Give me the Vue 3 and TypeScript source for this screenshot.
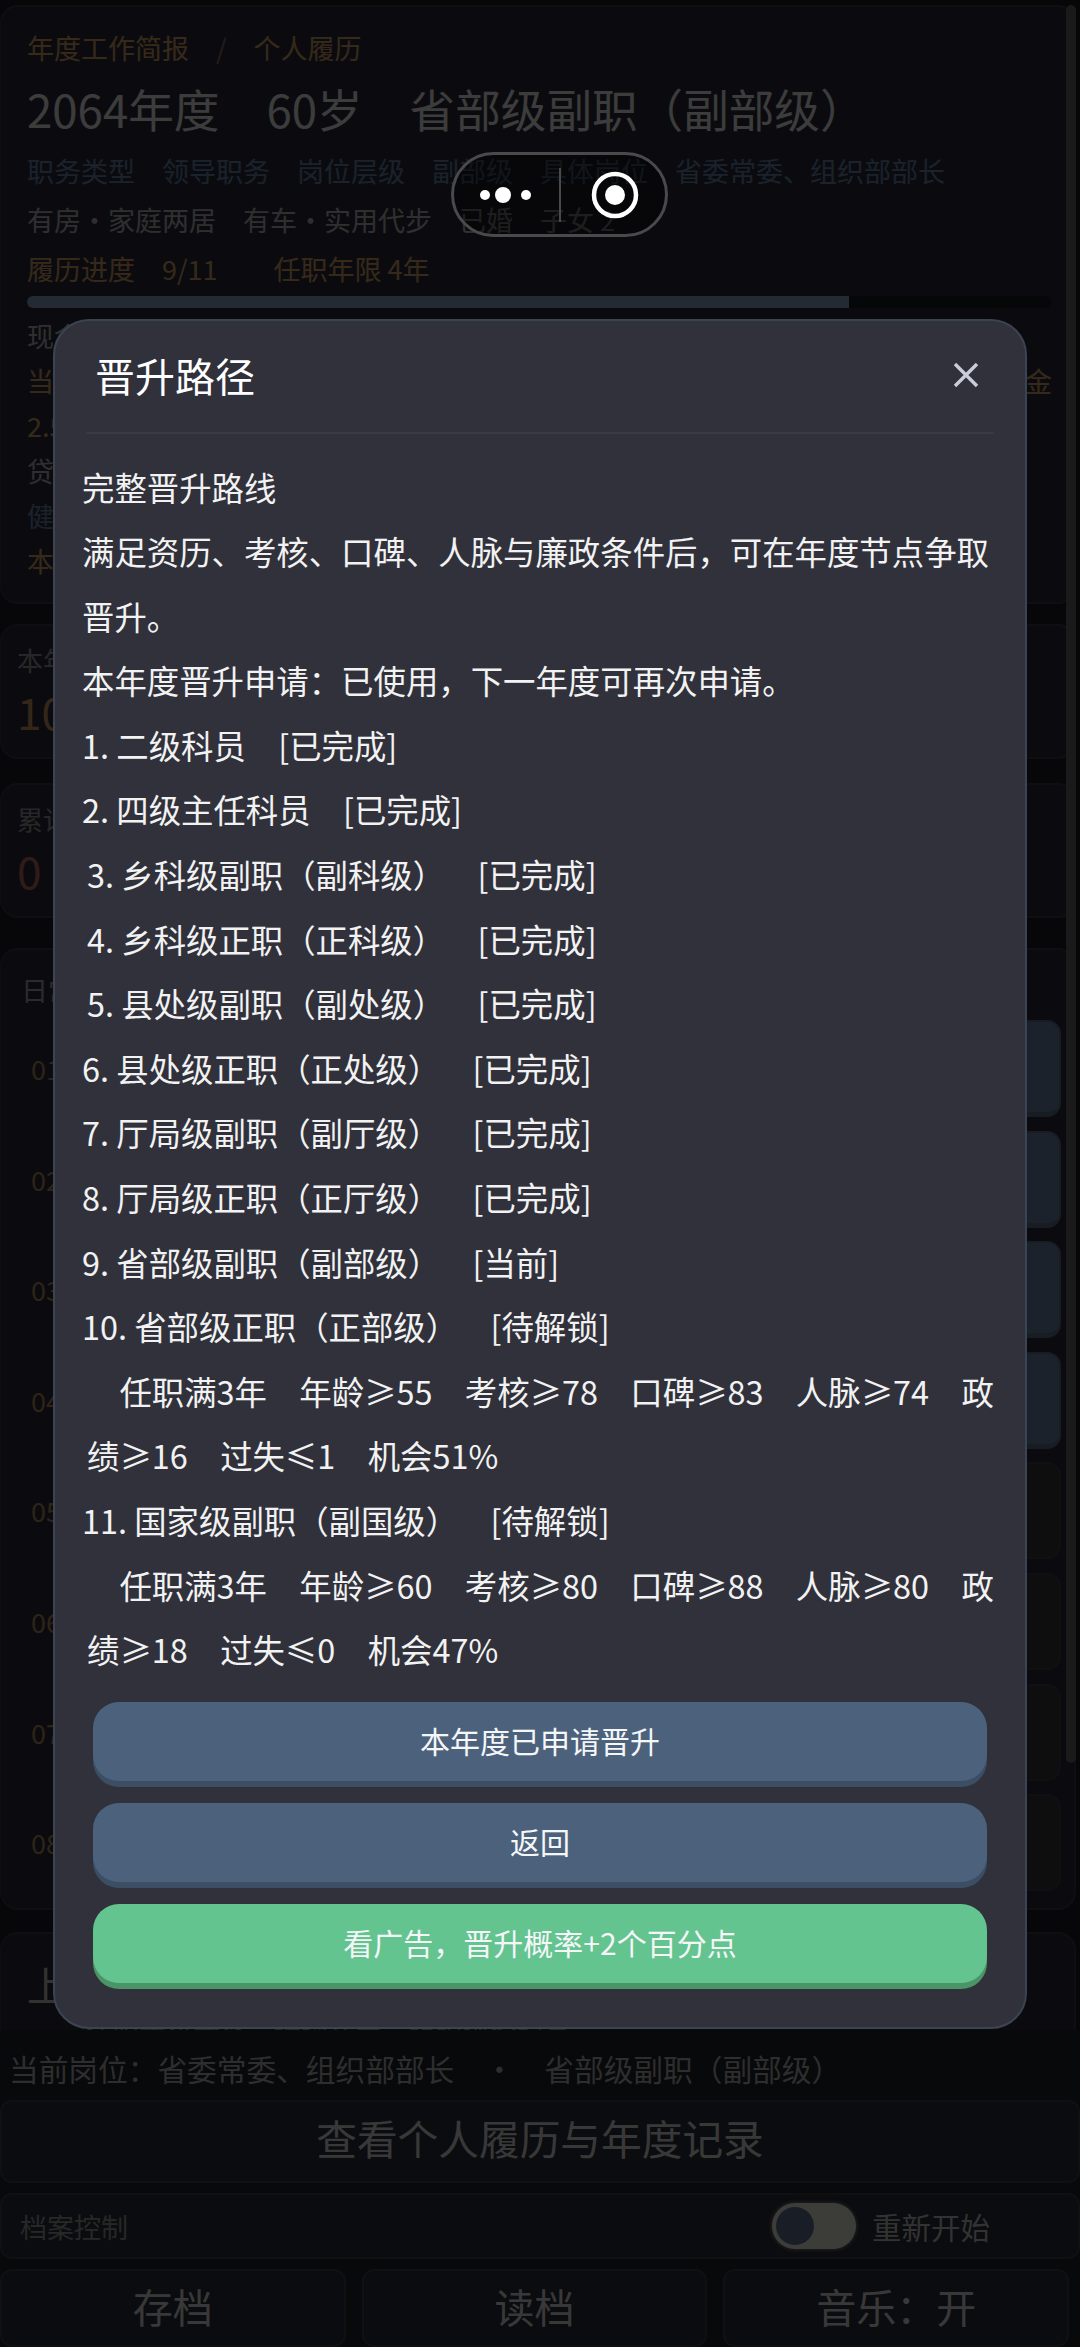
<template>
  <div class="page">
    <div class="scroll">
      <section class="card profile">
        <div class="crumb"><span>年度工作简报</span><span class="slash">/</span><span>个人履历</span></div>
        <h1 class="title"><span>2064年度</span><span>60岁</span><span>省部级副职（副部级）</span></h1>
        <div class="row blue"><span>职务类型</span><span>领导职务</span><span>岗位层级</span><span>副部级</span><span>具体岗位</span><span>省委常委、组织部部长</span></div>
        <div class="row gray"><span>有房・家庭两居</span><span>有车・实用代步</span><span>已婚</span><span>子女 2</span></div>
        <div class="row brown"><span>履历进度</span><span>9/11</span><span class="wide">任职年限 4年</span></div>
        <div class="bar"><div class="bar-fill" :style="{ width: progress + '%' }"></div></div>
        <div class="line gray">现金</div>
        <div class="line brown split"><span>当前存款</span><span>现金</span></div>
        <div class="line brown">2.5</div>
        <div class="line gray">贷款</div>
        <div class="line blue">健康</div>
        <div class="line brown">本年</div>
      </section>

      <section class="card stat">
        <div class="stat-label">本年考核</div>
        <div class="stat-value orange">10</div>
      </section>
      <section class="card stat">
        <div class="stat-label">累计过失</div>
        <div class="stat-value red">0</div>
      </section>

      <section class="card schedule">
        <div class="schedule-title">日常事务</div>
        <div v-for="(n, i) in slots" :key="n" class="slot">
          <span class="slot-no">{{ n }}</span>
          <div class="slot-box" :class="{ filled: i < 4 }"></div>
        </div>
      </section>

      <section class="card last">
        <div class="last-title">上年度总结</div>
        <div class="last-text">任职考核合格，继续在岗，组织评价稳定</div>
      </section>

      <div class="scrollbar"></div>
    </div>

    <footer class="bottom">
      <div class="post"><span>当前岗位：省委常委、组织部部长</span><span class="dot">·</span><span>省部级副职（副部级）</span></div>
      <button class="record">查看个人履历与年度记录</button>
      <div class="archive">
        <span class="archive-label">档案控制</span>
        <div class="restart">
          <div class="toggle"><div class="knob"></div></div>
          <span>重新开始</span>
        </div>
      </div>
      <div class="tools">
        <button>存档</button>
        <button>读档</button>
        <button>音乐：开</button>
      </div>
    </footer>

    <div class="scrim">
      <div class="modal">
        <header class="modal-head">
          <h2>晋升路径</h2>
          <svg class="close" width="26" height="26" viewBox="0 0 26 26">
            <path d="M2 2 L24 24 M24 2 L2 24" stroke="#c8cdd9" stroke-width="3.4" fill="none" />
          </svg>
        </header>
        <div class="modal-body">
          <p v-for="(item, i) in lines" :key="i" :class="item.cls">{{ item.text }}</p>
        </div>
        <div class="actions">
          <button class="btn">本年度已申请晋升</button>
          <button class="btn">返回</button>
          <button class="btn green">看广告，晋升概率+2个百分点</button>
        </div>
      </div>
    </div>

    <div class="capsule">
      <svg width="88" height="40" viewBox="0 0 88 40">
        <circle cx="31" cy="20" r="5" fill="#fff" />
        <circle cx="49" cy="20" r="8" fill="#fff" />
        <circle cx="72" cy="20" r="5" fill="#fff" />
      </svg>
      <span class="capsule-sep"></span>
      <svg width="48" height="48" viewBox="0 0 48 48">
        <circle cx="24" cy="24" r="21" stroke="#fff" stroke-width="4.5" fill="none" />
        <circle cx="24" cy="24" r="10" fill="#fff" />
      </svg>
    </div>
  </div>
</template>

<script setup lang="ts">
interface Line {
  text: string;
  cls?: string;
}

const progress = 80.2;
const slots: string[] = ['01', '02', '03', '04', '05', '06', '07', '08'];

const lines: Line[] = [
  { text: '完整晋升路线' },
  { text: '满足资历、考核、口碑、人脉与廉政条件后，可在年度节点争取晋升。' },
  { text: '本年度晋升申请：已使用，下一年度可再次申请。' },
  { text: '1. 二级科员\u2003[已完成]' },
  { text: '2. 四级主任科员\u2003[已完成]' },
  { text: '3. 乡科级副职（副科级）\u2003[已完成]', cls: 'inset' },
  { text: '4. 乡科级正职（正科级）\u2003[已完成]', cls: 'inset' },
  { text: '5. 县处级副职（副处级）\u2003[已完成]', cls: 'inset' },
  { text: '6. 县处级正职（正处级）\u2003[已完成]' },
  { text: '7. 厅局级副职（副厅级）\u2003[已完成]' },
  { text: '8. 厅局级正职（正厅级）\u2003[已完成]' },
  { text: '9. 省部级副职（副部级）\u2003[当前]' },
  { text: '10. 省部级正职（正部级）\u2003[待解锁]' },
  { text: '\u2003任职满3年\u2003年龄≥55\u2003考核≥78\u2003口碑≥83\u2003人脉≥74\u2003政绩≥16\u2003过失≤1\u2003机会51%', cls: 'inset' },
  { text: '11. 国家级副职（副国级）\u2003[待解锁]' },
  { text: '\u2003任职满3年\u2003年龄≥60\u2003考核≥80\u2003口碑≥88\u2003人脉≥80\u2003政绩≥18\u2003过失≤0\u2003机会47%', cls: 'inset' },
];
</script>

<style>
html,
body {
  margin: 0;
  background: #08090b;
}
</style>

<style scoped>
.page {
  position: relative;
  width: 1080px;
  height: 2347px;
  display: flex;
  flex-direction: column;
  overflow: hidden;
  background: #1a1b22;
  color: #e6e6e6;
  font-family: "Noto Sans CJK SC", "Noto Sans", sans-serif;
}

.scroll {
  position: relative;
  height: 2030px;
  flex: none;
  overflow: hidden;
  padding: 5px 4px 0 0;
  box-sizing: border-box;
}

.card {
  border: 2px solid #34363f;
  border-left-width: 1px;
  border-radius: 18px;
  background: #282a37;
  box-sizing: border-box;
}

.profile {
  height: 599px;
  padding: 21px 22px 0 26px;
  font-size: 27px;
}

.crumb {
  display: flex;
  gap: 27px;
  height: 40px;
  line-height: 40px;
  color: #c2955f;
}

.slash {
  opacity: 0.6;
}

.title {
  display: flex;
  gap: 47px;
  margin: 9px 0 7px;
  height: 62px;
  line-height: 62px;
  font-size: 45.6px;
  font-weight: 400;
  color: #d8d8d8;
}

.row {
  display: flex;
  gap: 27px;
  height: 49px;
  line-height: 49px;
  white-space: nowrap;
}

.blue {
  color: #5d7a9f;
}

.gray {
  color: #a8a8a8;
}

.brown {
  color: #c2955f;
}

.wide {
  margin-left: 29px;
}

.bar {
  height: 12px;
  margin: 3px 0 5px;
  border-radius: 6px;
  background: #171923;
  overflow: hidden;
}

.bar-fill {
  height: 100%;
  background: #7d96b8;
}

.line {
  height: 45px;
  line-height: 45px;
}

.split {
  display: flex;
  justify-content: space-between;
}

.stat {
  height: 135px;
  margin-top: 20px;
  padding: 14px 16px;
}

.stat + .stat {
  margin-top: 24px;
}

.stat-label {
  font-size: 26px;
  line-height: 40px;
  color: #8c8c8c;
}

.stat-value {
  font-size: 44px;
  line-height: 62px;
}

.orange {
  color: #b98d58;
}

.red {
  color: #b0605a;
}

.schedule {
  height: 962px;
  margin-top: 30px;
  padding: 18px 13px 0 20px;
}

.schedule-title {
  height: 52px;
  font-size: 27px;
  line-height: 44px;
  color: #9a9a9a;
}

.slot {
  display: flex;
  align-items: center;
  justify-content: space-between;
  height: 97px;
  margin-bottom: 13.6px;
}

.slot-no {
  margin-left: 10px;
  font-size: 27px;
  color: #a67f52;
}

.slot-box {
  width: 900px;
  height: 97px;
  box-sizing: border-box;
  border: 2px solid #3a3b42;
  border-radius: 14px;
  background: #333336;
}

.slot-box.filled {
  border-color: #566a83;
  border-bottom-width: 5px;
  background: #647c9c;
}

.last {
  height: 200px;
  margin-top: 22px;
  padding: 20px 26px;
}

.last-title {
  font-size: 40px;
  line-height: 60px;
  color: #b4b4b4;
}

.last-text {
  padding-left: 58px;
  font-size: 27px;
  line-height: 36px;
  color: #8c8c8c;
}

.scrollbar {
  position: absolute;
  top: 5px;
  right: 4px;
  width: 10px;
  height: 1758px;
  border-radius: 5px;
  background: #5f5f5f;
}

.bottom {
  flex: 1;
  background: #1f2129;
}

.post {
  display: flex;
  height: 70px;
  padding-left: 9px;
  line-height: 78px;
  font-size: 29.7px;
  color: #a4a4a4;
  white-space: nowrap;
}

.dot {
  width: 90px;
  text-align: center;
}

button {
  font-family: inherit;
  color: #c8c8c8;
  cursor: pointer;
}

.record {
  display: block;
  width: 1080px;
  height: 83px;
  padding-bottom: 8px;
  border: 2px solid #3a3c45;
  border-radius: 12px;
  background: #2a2c36;
  font-size: 40.7px;
  line-height: 1;
}

.archive {
  display: flex;
  align-items: center;
  justify-content: space-between;
  height: 66px;
  margin-top: 10px;
  padding: 0 88px 0 18px;
  border: 2px solid #3a3c45;
  border-radius: 12px;
  background: #2a2c36;
  box-sizing: border-box;
}

.archive-label {
  font-size: 27px;
  color: #8c8c8c;
}

.restart {
  display: flex;
  align-items: center;
  gap: 16px;
  font-size: 29.5px;
  color: #b4b4b4;
}

.toggle {
  width: 84px;
  height: 46px;
  padding: 4px;
  box-sizing: border-box;
  border-radius: 23px;
  background: #d6dccb;
  box-shadow: 0 0 4px #999;
}

.knob {
  width: 38px;
  height: 38px;
  border-radius: 50%;
  background: #5b6a8a;
}

.tools {
  display: flex;
  gap: 16px;
  margin-top: 10px;
  padding-right: 11px;
}

.tools button {
  flex: 1;
  height: 78px;
  padding-bottom: 6px;
  border: 2px solid #3a3c45;
  border-radius: 12px;
  background: #2a2c36;
  font-size: 40px;
}

.scrim {
  position: absolute;
  inset: 0;
  display: flex;
  align-items: center;
  justify-content: center;
  background: rgba(0, 0, 0, 0.72);
}

.modal {
  width: 974px;
  height: 1710px;
  box-sizing: border-box;
  border: 2px solid #3b4453;
  border-radius: 36px;
  background: #30313b;
  color: #f2f2f2;
}

.modal-head {
  display: flex;
  align-items: center;
  justify-content: space-between;
  height: 113px;
  margin: 0 31px;
  padding: 0 15px 3px 9px;
  border-bottom: 2px solid #383b47;
  box-sizing: border-box;
}

.modal-head h2 {
  margin: 0;
  font-size: 40px;
  font-weight: 400;
  color: #fff;
}

.close {
  display: block;
}

.modal-body {
  width: 918px;
  margin: 21px 0 0 27px;
  font-size: 32.4px;
  line-height: 64.6px;
}

.modal-body p {
  margin: 0;
  white-space: pre-wrap;
}

.modal-body .inset {
  padding-left: 5px;
}

.actions {
  display: flex;
  flex-direction: column;
  gap: 16px;
  margin: 20px 38px 0;
}

.btn {
  height: 79px;
  margin-bottom: 6px;
  padding-bottom: 4px;
  border: none;
  border-radius: 26px;
  background: #4c627c;
  box-shadow: 0 6px 0 #3c4e64;
  color: #f4f6f8;
  font-size: 30px;
}

.btn.green {
  background: #63c490;
  box-shadow: 0 6px 0 #4a9468;
}

.capsule {
  position: absolute;
  top: 152px;
  left: 451px;
  display: flex;
  align-items: center;
  width: 217px;
  height: 85px;
  box-sizing: border-box;
  border: 3px solid #4a4a4c;
  border-radius: 43px;
  background: rgba(0, 0, 0, 0.35);
}

.capsule svg {
  flex: none;
}

.capsule-sep {
  width: 2px;
  height: 54px;
  margin: 0 30px 0 17px;
  background: #4a4a4c;
}
</style>
